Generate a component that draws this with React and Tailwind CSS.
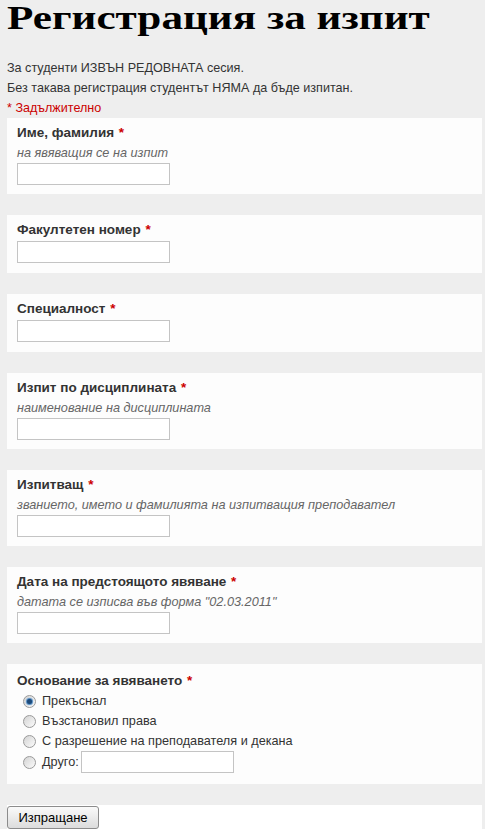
import { useState } from 'react';

const fields = [
  { name: 'name', label: 'Име, фамилия', help: 'на явяващия се на изпит' },
  { name: 'fn', label: 'Факултетен номер' },
  { name: 'spec', label: 'Специалност' },
  { name: 'subject', label: 'Изпит по дисциплината', help: 'наименование на дисциплината' },
  { name: 'examiner', label: 'Изпитващ', help: 'званието, името и фамилията на изпитващия преподавател' },
  { name: 'date', label: 'Дата на предстоящото явяване', help: 'датата се изписва във форма "02.03.2011"' },
];

const reasons = ['Прекъснал', 'Възстановил права', 'С разрешение на преподавателя и декана'];

function Label({ children }) {
  return (
    <div className="text-[13.5px] leading-5 h-5 font-bold text-[#333]">
      {children} <span className="text-[#c00] ml-[1px]">*</span>
    </div>
  );
}

function Radio({ checked, onChange }) {
  return (
    <span
      onClick={onChange}
      className="w-[13px] h-[13px] rounded-full border border-[#9a9a9a] bg-gradient-to-br from-[#d4d4d4] to-[#fbfbfb] flex items-center justify-center shrink-0 cursor-pointer"
    >
      {checked && <span className="w-[5px] h-[5px] rounded-full bg-[#1c4a7a] shadow-[0_0_1px_1px_#4a86c0]" />}
    </span>
  );
}

export default function App() {
  const [reason, setReason] = useState(0);

  return (
    <div className="min-h-[829px] bg-[#eeeeee] font-['Liberation_Sans',Arial,sans-serif] text-[#333] overflow-hidden">
      <div className="h-9 pl-[7px]">
        <h1 className="inline-block font-['Liberation_Serif','Times_New_Roman',serif] font-bold text-[34px] leading-[36px] text-black origin-left scale-x-[1.27] whitespace-nowrap">
          Регистрация за изпит
        </h1>
      </div>

      <div className="px-[7px] pt-[22px] text-[12.6px] leading-5">
        <div>За студенти ИЗВЪН РЕДОВНАТА сесия.</div>
        <div>Без такава регистрация студентът НЯМА да бъде изпитан.</div>
        <div className="text-[#c00]">* Задължително</div>
      </div>

      <form className="pl-[7px] pr-[3px] flex flex-col gap-[21px]" onSubmit={(e) => e.preventDefault()}>
        {fields.map((f) => (
          <div key={f.name} className={`bg-[#fdfdfd] px-[10px] pt-[5px] ${f.help ? 'pb-[9px]' : 'pb-[10px]'}`}>
            <Label>{f.label}</Label>
            {f.help ? (
              <div className="text-[12.7px] leading-5 h-5 italic text-[#666]">{f.help}</div>
            ) : (
              <div className="h-[1px]" />
            )}
            <input
              name={f.name}
              className="block w-[153px] h-[22px] border border-[#c4c4c4] bg-white outline-none text-[13px] px-1"
            />
          </div>
        ))}

        <div className="bg-[#fdfdfd] px-[10px] pt-[7px] pb-[11px]">
          <Label>Основание за явяването</Label>
          <div className="pl-[6px] text-[12.7px] leading-5">
            {reasons.map((r, i) => (
              <label key={r} className="flex items-center gap-[6px] h-5">
                <Radio checked={reason === i} onChange={() => setReason(i)} />
                <span>{r}</span>
              </label>
            ))}
            <label className="flex items-center gap-[6px] h-[22px]">
              <Radio checked={reason === 3} onChange={() => setReason(3)} />
              <span>Друго:</span>
              <input className="w-[153px] h-[22px] border border-[#c4c4c4] bg-white outline-none text-[13px] px-1 -ml-[4px]" />
            </label>
          </div>
        </div>

        <div className="bg-white h-[26px]">
          <button
            type="submit"
            className="h-[23px] w-[92px] border border-[#8c8c8c] rounded-[3px] bg-gradient-to-b from-[#fafafa] to-[#dcdcdc] text-[13px] text-black"
          >
            Изпращане
          </button>
        </div>
      </form>
    </div>
  );
}
